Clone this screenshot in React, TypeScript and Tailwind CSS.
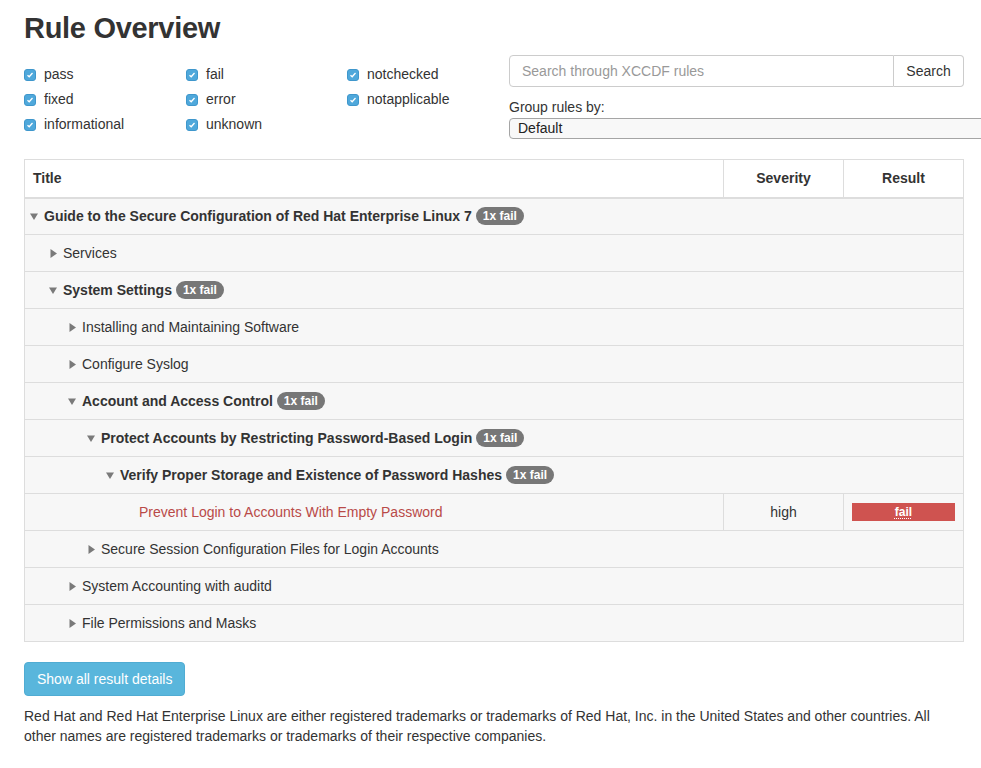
import React from "react";

const font = { fontFamily: '"Liberation Sans", Arial, Helvetica, sans-serif' };

function Check({ label }: { label: string }) {
  return (
    <div className="flex items-center h-[25px] text-[14px] text-[#333]">
      <span className="w-[12px] h-[12px] rounded-[3px] bg-[#4fa8db] border border-[#3f97cc] flex items-center justify-center mr-[8px]">
        <svg width="8" height="8" viewBox="0 0 8 8">
          <path d="M1.5 4.2 L3.2 5.8 L6.5 2" stroke="white" strokeWidth="1.3" fill="none" />
        </svg>
      </span>
      <span>{label}</span>
    </div>
  );
}

type Row = {
  level: number;
  title: string;
  kind: "open" | "closed" | "rule";
  badge?: boolean;
};

const rows: Row[] = [
  { level: 0, title: "Guide to the Secure Configuration of Red Hat Enterprise Linux 7", kind: "open", badge: true },
  { level: 1, title: "Services", kind: "closed" },
  { level: 1, title: "System Settings", kind: "open", badge: true },
  { level: 2, title: "Installing and Maintaining Software", kind: "closed" },
  { level: 2, title: "Configure Syslog", kind: "closed" },
  { level: 2, title: "Account and Access Control", kind: "open", badge: true },
  { level: 3, title: "Protect Accounts by Restricting Password-Based Login", kind: "open", badge: true },
  { level: 4, title: "Verify Proper Storage and Existence of Password Hashes", kind: "open", badge: true },
  { level: 5, title: "Prevent Login to Accounts With Empty Password", kind: "rule" },
  { level: 3, title: "Secure Session Configuration Files for Login Accounts", kind: "closed" },
  { level: 2, title: "System Accounting with auditd", kind: "closed" },
  { level: 2, title: "File Permissions and Masks", kind: "closed" },
];

const padMap: Record<number, string> = {
  0: "pl-[5px]",
  1: "pl-[24px]",
  2: "pl-[43px]",
  3: "pl-[62px]",
  4: "pl-[81px]",
  5: "pl-[100px]",
};

function Triangle({ open }: { open: boolean }) {
  return (
    <span className="w-[8px] mr-[6px] flex items-center justify-center">
      {open ? (
        <svg width="8" height="7" viewBox="0 0 8 7">
          <path d="M0 0.5 L8 0.5 L4 7 Z" fill="#7a7a7a" />
        </svg>
      ) : (
        <svg width="7" height="9" viewBox="0 0 7 9">
          <path d="M0.5 0 L7 4.5 L0.5 9 Z" fill="#7a7a7a" />
        </svg>
      )}
    </span>
  );
}

function Badge() {
  return (
    <span className="ml-[4px] inline-flex items-center h-[18px] px-[7px] rounded-[9px] bg-[#777] text-white text-[12px] font-bold leading-none">
      1x fail
    </span>
  );
}

export default function App() {
  return (
    <div style={font} className="w-[981px] min-h-[768px] bg-white overflow-hidden text-[#333]">
      <div className="w-[940px] ml-[24px] pt-[12px]">
        <h1 className="text-[29px] leading-[33px] h-[33px] font-bold text-[#333] tracking-[-0.3px]">Rule Overview</h1>

        <div className="flex mt-[10px]">
          <div className="w-[485px] pt-[7px]">
            <div className="grid grid-cols-[162px_161px_161px]">
              <Check label="pass" />
              <Check label="fail" />
              <Check label="notchecked" />
              <Check label="fixed" />
              <Check label="error" />
              <Check label="notapplicable" />
              <Check label="informational" />
              <Check label="unknown" />
            </div>
          </div>
          <div className="w-[455px]">
            <div className="flex h-[32px]">
              <div className="flex-1 border border-[#ccc] rounded-l-[4px] flex items-center px-[12px] text-[14px] text-[#999]">
                Search through XCCDF rules
              </div>
              <div className="w-[70px] border border-l-0 border-[#ccc] rounded-r-[4px] flex items-center justify-center text-[14px] text-[#333]">
                Search
              </div>
            </div>
            <div className="mt-[10px] h-[20px] leading-[20px] text-[14px] text-[#333]">Group rules by:</div>
            <div className="mt-[1px] w-[490px] h-[21px] border border-[#a5a5a5] rounded-[4px] bg-[#f8f8f8] flex items-center pl-[8px] text-[14px] text-[#222]">
              Default
            </div>
          </div>
        </div>

        <table className="mt-[20px] w-[940px] border-collapse border border-[#ddd] text-[14px]">
          <thead>
            <tr className="bg-white">
              <th className="border border-[#ddd] border-b-2 text-left font-bold px-[8px] h-[38px] leading-[20px]">Title</th>
              <th className="border border-[#ddd] border-b-2 w-[120px] text-center font-bold px-[8px] leading-[20px]">Severity</th>
              <th className="border border-[#ddd] border-b-2 w-[120px] text-center font-bold px-[8px] leading-[20px]">Result</th>
            </tr>
          </thead>
          <tbody>
            {rows.map((r, i) =>
              r.kind === "rule" ? (
                <tr key={i} className="bg-[#f7f7f7]">
                  <td className={`border border-[#ddd] h-[37px] py-0 ${padMap[r.level]}`}>
                    <div className="flex items-center pl-[14px] text-[#b94a48]">{r.title}</div>
                  </td>
                  <td className="border border-[#ddd] text-center">high</td>
                  <td className="border border-[#ddd] px-[8px]">
                    <div className="h-[18px] bg-[#cf5350] flex items-center justify-center text-white text-[12px] font-bold">
                      <span className="underline decoration-dotted underline-offset-[2px]">fail</span>
                    </div>
                  </td>
                </tr>
              ) : (
                <tr key={i} className="bg-[#f7f7f7]">
                  <td colSpan={3} className={`border border-[#ddd] h-[37px] py-0 ${padMap[r.level]}`}>
                    <div className="flex items-center">
                      <Triangle open={r.kind === "open"} />
                      <span className={r.kind === "open" ? "font-bold" : ""}>{r.title}</span>
                      {r.badge && <Badge />}
                    </div>
                  </td>
                </tr>
              )
            )}
          </tbody>
        </table>

        <button className="mt-[20px] h-[34px] px-[12px] rounded-[4px] bg-[#59b6dc] text-white text-[14px] border border-[#50acd3]">
          Show all result details
        </button>

        <p className="mt-[10px] w-[939px] text-[14px] leading-[20px] text-[#333]">
          Red Hat and Red Hat Enterprise Linux are either registered trademarks or trademarks of Red Hat, Inc. in the United States and other countries. All other names are registered trademarks or trademarks of their respective companies.
        </p>
      </div>
    </div>
  );
}
